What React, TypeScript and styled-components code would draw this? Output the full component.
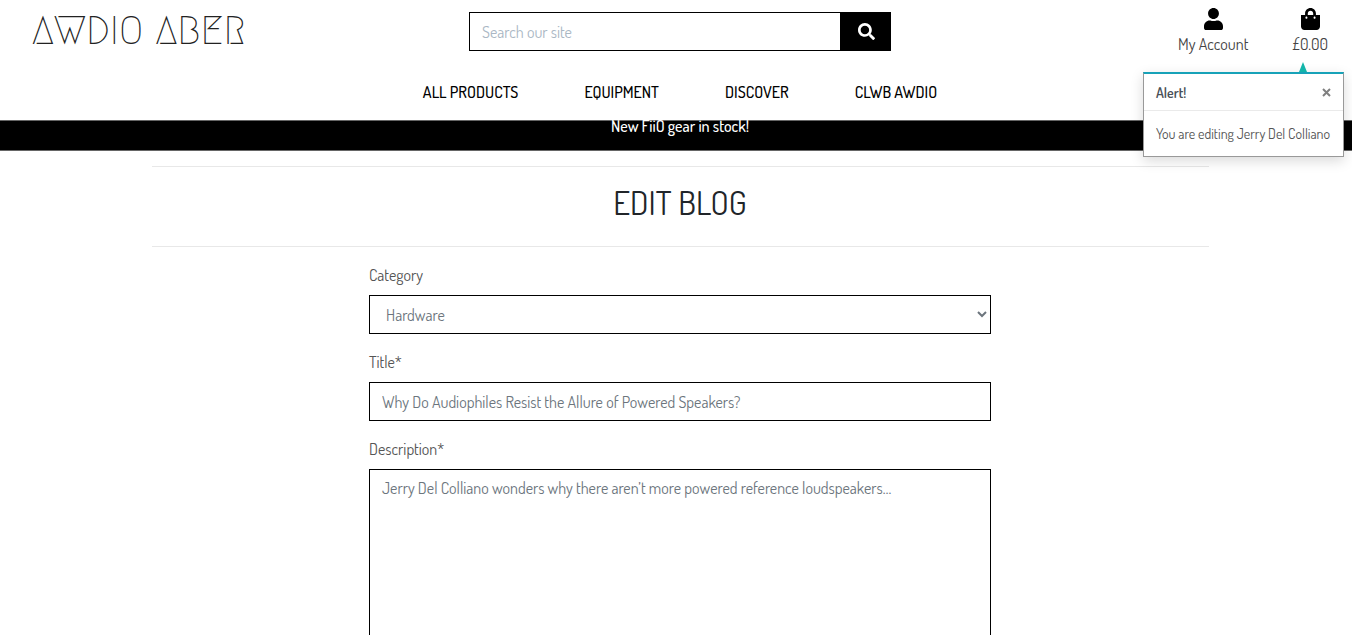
import React from "react";
import styled, { createGlobalStyle } from "styled-components";

const GlobalStyle = createGlobalStyle`
  *, *::before, *::after { box-sizing: border-box; }
  html { scrollbar-width: none; }
  body {
    margin: 0;
    background: #fff;
    color: #555;
    font-family: Dosis, "Roboto Condensed", Lato, sans-serif;
    font-size: 16px;
    line-height: 24px;
  }
  input, select, textarea, button { font: inherit; }
`;

const Page = styled.div`
  min-height: 100vh;
  padding-left: 8px;
`;

const Header = styled.header`
  position: relative;
  height: 120px;
`;

const TopRow = styled.div`
  display: grid;
  grid-template-columns: 1fr 422px 1fr;
  align-items: start;
  height: 80px;
`;

const Brand = styled.a`
  padding: 7px 0 0 24px;
  color: #222;
  font-family: Megrim, Lato, sans-serif;
  font-size: 40px;
  font-weight: 400;
  line-height: 48px;
  text-decoration: none;
  white-space: nowrap;
`;

const SearchForm = styled.form`
  display: flex;
  height: 39px;
  margin-top: 12px;
`;

const SearchInput = styled.input`
  flex: 1;
  min-width: 0;
  padding: 0 12px;
  border: 1px solid #000;
  border-radius: 0;
  background: #fff;
  color: #495057;
  outline: none;
  &::placeholder { color: #aab7c4; opacity: 1; }
`;

const SearchButton = styled.button`
  display: flex;
  align-items: center;
  justify-content: center;
  width: 50px;
  padding: 0;
  border: 0;
  background: #000;
  color: #fff;
`;

const AccountNav = styled.nav`
  display: flex;
  justify-content: flex-end;
  gap: 44px;
  padding: 8px 24px 0 0;
`;

const AccountLink = styled.a`
  display: flex;
  flex-direction: column;
  align-items: center;
  gap: 2px;
  color: #444;
  text-decoration: none;
  svg { display: block; fill: #000; }
`;

const MainNav = styled.nav`
  display: flex;
  justify-content: center;
  gap: 66px;
`;

const MainLink = styled.a`
  color: #000;
  font-weight: 500;
  text-decoration: none;
`;

const Banner = styled.div`
  height: 31px;
  border: solid #666;
  border-width: 1px 0;
  margin-left: -8px;
  padding-left: 8px;
  background: #000;
  color: #fff;
  font-weight: 500;
  line-height: 10px;
  text-align: center;
`;

const Container = styled.main`
  max-width: 1057px;
  margin: 15px auto 0;
`;

const Heading = styled.h1`
  margin: 0;
  padding: 15px 0 24px;
  border: solid #e8e8e8;
  border-width: 1px 0;
  color: #212529;
  font-size: 33px;
  font-weight: 400;
  line-height: 40px;
  text-align: center;
`;

const BlogForm = styled.form`
  display: flex;
  flex-direction: column;
  gap: 16px;
  max-width: 622px;
  margin: 16px auto 0;
`;

const Field = styled.div`
  display: flex;
  flex-direction: column;
  gap: 8px;
`;

const fieldBox = `
  width: 100%;
  height: 39px;
  padding: 6px 12px;
  border: 1px solid #000;
  border-radius: 0;
  background: #fff;
  color: #6c757d;
  outline: none;
`;

const TextInput = styled.input`${fieldBox}`;
const Select = styled.select`${fieldBox}`;
const TextArea = styled.textarea`
  ${fieldBox}
  height: 254px;
  resize: none;
`;

const Toast = styled.section`
  position: absolute;
  z-index: 2;
  top: 72px;
  right: 8px;
  width: 201px;
  border: 1px solid #999;
  border-top: 2px solid #17a2b8;
  background: #fff;
  box-shadow: 0 4px 12px rgba(0, 0, 0, 0.15);
  font-size: 14px;
  line-height: 20px;
  &::before {
    content: "";
    position: absolute;
    top: -12px;
    right: 36px;
    border: solid transparent;
    border-width: 0 4px 10px;
    border-bottom-color: #13b5aa;
  }
`;

const ToastHeader = styled.div`
  display: flex;
  align-items: center;
  justify-content: space-between;
  height: 37px;
  padding: 1px 12px 0;
  border-bottom: 1px solid #eaeaea;
  color: #495057;
`;

const ToastTitle = styled.strong`
  font-weight: 600;
`;

const CloseButton = styled.button`
  display: flex;
  padding: 0;
  border: 0;
  background: none;
  color: #808080;
`;

const ToastBody = styled.p`
  margin: 0;
  padding: 13px 0 12px 12px;
  white-space: nowrap;
`;

const links = ["ALL PRODUCTS", "EQUIPMENT", "DISCOVER", "CLWB AWDIO"];

export default function App() {
  return (
    <>
      <GlobalStyle />
      <Page>
        <Header>
          <TopRow>
            <Brand href="#">AWDIO ABER</Brand>
            <SearchForm role="search" onSubmit={(e) => e.preventDefault()}>
              <SearchInput type="search" aria-label="Search our site" placeholder="Search our site" />
              <SearchButton type="submit" aria-label="Search">
                <svg width="17" height="17" viewBox="0 0 512 512" fill="currentColor">
                  <path d="M505 442.700L405.300 343c-4.500-4.500-10.600-7-17-7H372c27.600-35.300 44-79.700 44-128C416 93.100 322.900 0 208 0S0 93.100 0 208s93.100 208 208 208c48.300 0 92.700-16.400 128-44v16.300c0 6.400 2.500 12.500 7 17l99.700 99.700c9.400 9.400 24.600 9.400 33.900 0l28.300-28.300c9.400-9.400 9.400-24.600.1-34zM208 336c-70.700 0-128-57.200-128-128 0-70.700 57.200-128 128-128 70.700 0 128 57.200 128 128 0 70.700-57.200 128-128 128z" />
                </svg>
              </SearchButton>
            </SearchForm>
            <AccountNav aria-label="Account">
              <AccountLink href="#">
                <svg width="19" height="22" viewBox="0 0 448 512" preserveAspectRatio="none">
                  <path d="M224 256c70.700 0 128-57.300 128-128S294.700 0 224 0 96 57.300 96 128s57.300 128 128 128zm89.600 32h-16.700c-22.200 10.200-46.900 16-72.900 16s-50.600-5.800-72.900-16h-16.700C60.200 288 0 348.200 0 422.400V464c0 26.500 21.500 48 48 48h352c26.500 0 48-21.500 48-48v-41.600c0-74.200-60.200-134.400-134.400-134.400z" />
                </svg>
                My Account
              </AccountLink>
              <AccountLink href="#">
                <svg width="19" height="22" viewBox="0 0 448 512" preserveAspectRatio="none">
                  <path d="M352 160v-32C352 57.420 294.579 0 224 0 153.420 0 96 57.420 96 128v32H0v272c0 44.183 35.817 80 80 80h288c44.183 0 80-35.817 80-80V160h-96zm-192-32c0-35.290 28.710-64 64-64s64 28.710 64 64v32H160v-32zm160 120c-13.255 0-24-10.745-24-24s10.745-24 24-24 24 10.745 24 24-10.745 24-24 24zm-192 0c-13.255 0-24-10.745-24-24s10.745-24 24-24 24 10.745 24 24-10.745 24-24 24z" />
                </svg>
                £0.00
              </AccountLink>
            </AccountNav>
          </TopRow>
          <MainNav aria-label="Main">
            {links.map((l) => (
              <MainLink key={l} href="#">{l}</MainLink>
            ))}
          </MainNav>
          <Toast role="status">
            <ToastHeader>
              <ToastTitle>Alert!</ToastTitle>
              <CloseButton type="button" aria-label="Close">
                <svg width="9" height="9" viewBox="0 0 9 9" stroke="currentColor" strokeWidth="2">
                  <path d="M1 1L8 8M8 1L1 8" />
                </svg>
              </CloseButton>
            </ToastHeader>
            <ToastBody>You are editing Jerry Del Colliano</ToastBody>
          </Toast>
        </Header>
        <Banner>New FiiO gear in stock!</Banner>
        <Container>
          <Heading>EDIT BLOG</Heading>
          <BlogForm>
            <Field>
              <label htmlFor="category">Category</label>
              <Select id="category" defaultValue="Hardware">
                <option>Hardware</option>
              </Select>
            </Field>
            <Field>
              <label htmlFor="title">Title*</label>
              <TextInput id="title" defaultValue="Why Do Audiophiles Resist the Allure of Powered Speakers?" />
            </Field>
            <Field>
              <label htmlFor="description">Description*</label>
              <TextArea id="description" defaultValue="Jerry Del Colliano wonders why there aren’t more powered reference loudspeakers…" />
            </Field>
          </BlogForm>
        </Container>
      </Page>
    </>
  );
}
